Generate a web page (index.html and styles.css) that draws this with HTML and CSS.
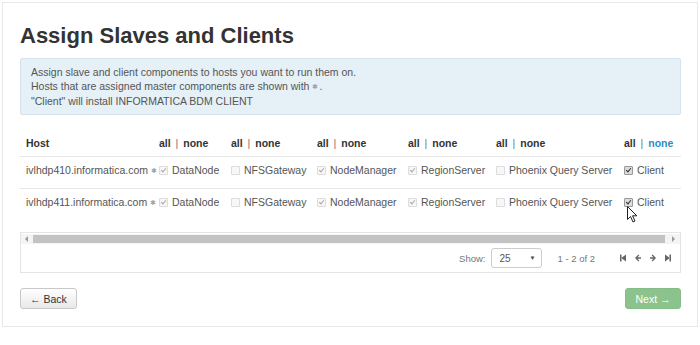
FILE: index.html
```html
<!DOCTYPE html>
<html lang="en">
<head>
    <meta charset="UTF-8">
    <title>Assign Slaves and Clients</title>
    <link rel="stylesheet" href="styles.css">
</head>
<body>
    <div class="panel">
        <h2>Assign Slaves and Clients</h2>
        <div class="alert">
            Assign slave and client components to hosts you want to run them on.<br>
            Hosts that are assigned master components are shown with<span class="star">&#10033;</span>.<br>
            "Client" will install INFORMATICA BDM CLIENT
        </div>

        <table class="hosts">
            <colgroup>
                <col style="width:133px"><col style="width:72px"><col style="width:86px">
                <col style="width:91px"><col style="width:88px"><col style="width:128px"><col>
            </colgroup>
            <thead>
                <tr>
                    <th>Host</th>
                    <th><a>all</a> <span class="sep">|</span> <a>none</a></th>
                    <th><a>all</a> <span class="sep">|</span> <a>none</a></th>
                    <th><a>all</a> <span class="sep">|</span> <a>none</a></th>
                    <th><a>all</a> <span class="sep">|</span> <a>none</a></th>
                    <th><a>all</a> <span class="sep">|</span> <a>none</a></th>
                    <th><a>all</a> <span class="sep">|</span> <a class="hover">none</a></th>
                </tr>
            </thead>
            <tbody>
                <tr>
                    <td>ivlhdp410.informatica.com<span class="star">&#10033;</span></td>
                    <td><label><span class="cb off on"></span>DataNode</label></td>
                    <td><label><span class="cb off"></span>NFSGateway</label></td>
                    <td><label><span class="cb off on"></span>NodeManager</label></td>
                    <td><label><span class="cb off on"></span>RegionServer</label></td>
                    <td><label><span class="cb off"></span>Phoenix Query Server</label></td>
                    <td><label><span class="cb on"></span>Client</label></td>
                </tr>
                <tr>
                    <td>ivlhdp411.informatica.com<span class="star">&#10033;</span></td>
                    <td><label><span class="cb off on"></span>DataNode</label></td>
                    <td><label><span class="cb off"></span>NFSGateway</label></td>
                    <td><label><span class="cb off on"></span>NodeManager</label></td>
                    <td><label><span class="cb off on"></span>RegionServer</label></td>
                    <td><label><span class="cb off"></span>Phoenix Query Server</label></td>
                    <td class="cursor-cell">
                        <label><span class="cb on"></span>Client</label>
                        <svg class="cursor" width="11" height="17" viewBox="0 0 11 17">
                            <path d="M0.5 0.5 L0.5 13.5 L3.5 10.5 L6 16 L8 15 L5.5 9.8 L9.8 9.8 Z" fill="#fff" stroke="#222" stroke-width="1"/>
                        </svg>
                    </td>
                </tr>
            </tbody>
        </table>

        <div class="table-foot">
            <div class="scrollbar">
                <span class="arr left"></span>
                <div class="thumb"></div>
                <span class="arr right"></span>
            </div>
            <div class="pager">
                <span class="show">Show:</span>
                <div class="select"><span>25</span><span class="caret">&#9660;</span></div>
                <span class="count">1 - 2 of 2</span>
                <div class="nav">
                    <svg width="6" height="8" viewBox="0 0 6 8"><rect x="0" y="0.5" width="1.5" height="7" fill="#666"/><path d="M1.2 4 L6 0.5 V7.5 Z" fill="#666"/></svg>
                    <svg width="6" height="8" viewBox="0 0 6 8"><path d="M0 4 L3.4 0.5 L4.3 1.4 L2.6 3.3 H6 V4.7 H2.6 L4.3 6.6 L3.4 7.5 Z" fill="#666"/></svg>
                    <svg width="6" height="8" viewBox="0 0 6 8"><path d="M6 4 L2.6 0.5 L1.7 1.4 L3.4 3.3 H0 V4.7 H3.4 L1.7 6.6 L2.6 7.5 Z" fill="#666"/></svg>
                    <svg width="6" height="8" viewBox="0 0 6 8"><rect x="4.5" y="0.5" width="1.5" height="7" fill="#666"/><path d="M4.8 4 L0 0.5 V7.5 Z" fill="#666"/></svg>
                </div>
            </div>
        </div>

        <div class="actions">
            <button class="btn">&larr; Back</button>
            <button class="btn btn-next">Next &rarr;</button>
        </div>
    </div>
</body>
</html>
```

FILE: styles.css
```css
body {
    margin: 0;
    background: #fff;
    font-family: "Liberation Sans", Arial, sans-serif;
    font-size: 10.5px;
    color: #555;
}
.panel {
    margin: 2px 2px 0;
    border: 1px solid #e8e8e8;
    padding: 0 16px 17px 17px;
}
h2 {
    margin: 20px 0 9px;
    font-size: 22px;
    line-height: 26px;
    font-weight: bold;
    color: #333;
}
.alert {
    background: #e6f0f7;
    border: 1px solid #d6e3ee;
    border-radius: 2px;
    padding: 6px 10px;
    line-height: 14px;
    color: #555;
}
.star {
    color: #9aa4ad;
    font-size: 7px;
    margin: 0 1px 0 3px;
    vertical-align: 1px;
}
.hosts {
    width: 100%;
    margin-top: 13px;
    border-collapse: collapse;
    table-layout: fixed;
}
.hosts th, .hosts td {
    text-align: left;
    white-space: nowrap;
    line-height: 14px;
    padding: 6px 6px 10px;
}
.hosts th {
    padding: 8px 6px 6px;
    font-weight: bold;
    color: #333;
    border-bottom: 1px solid #e6e6e6;
}
.hosts tbody tr:first-child td {
    border-bottom: 1px solid #e6e6e6;
}
.hosts a {
    color: #333;
}
.hosts a.hover {
    color: #2f8dc6;
}
.sep {
    font-weight: normal;
    color: #777;
    margin: 0 2px;
}
label {
    display: inline-flex;
    align-items: center;
    gap: 4px;
}
.cb {
    position: relative;
    display: inline-block;
    width: 7px;
    height: 7px;
    border: 1px solid #999;
    border-radius: 1px;
    background: #dcdcdc;
}
.cb.off {
    border-color: #dcdcdc;
    background: #f7f7f7;
}
.cb.on::after {
    content: "";
    position: absolute;
    left: 2px;
    top: 0;
    width: 2px;
    height: 4px;
    border: solid #333;
    border-width: 0 1.5px 1.5px 0;
    transform: rotate(40deg);
}
.cb.off.on::after {
    border-color: #aaa;
}
.cursor-cell {
    position: relative;
}
.cursor {
    position: absolute;
    left: 9px;
    top: 17px;
}
.table-foot {
    margin-top: 12px;
    border: 1px solid #e4e4e4;
}
.scrollbar {
    display: flex;
    align-items: center;
    height: 10px;
    margin: 1px 0 0;
    background: #f4f4f4;
}
.thumb {
    flex: 1;
    height: 8px;
    margin: 0 7px 0 5px;
    background: #c3c3c3;
}
.arr {
    width: 0;
    height: 0;
    border-top: 3px solid transparent;
    border-bottom: 3px solid transparent;
}
.arr.left {
    margin-left: 4px;
    border-right: 3px solid #999;
}
.arr.right {
    margin-right: 5px;
    border-left: 3px solid #999;
}
.pager {
    display: flex;
    align-items: center;
    justify-content: flex-end;
    height: 28px;
    padding-right: 9px;
    font-size: 9.5px;
    color: #777;
}
.show {
    margin-right: 5px;
}
.select {
    display: flex;
    align-items: center;
    justify-content: space-between;
    box-sizing: border-box;
    width: 51px;
    height: 20px;
    padding: 0 5px 0 8px;
    border: 1px solid #ccc;
    border-radius: 3px;
    background: #fff;
    color: #555;
    font-size: 10px;
}
.caret {
    font-size: 6px;
    color: #444;
}
.count {
    margin: 0 25px 0 16px;
}
.nav {
    display: flex;
    gap: 9px;
}
.actions {
    display: flex;
    justify-content: space-between;
    margin-top: 15px;
}
.btn {
    font-family: "Liberation Sans", Arial, sans-serif;
    font-size: 10.5px;
    height: 21px;
    width: 57px;
    padding: 0;
    border: 1px solid #c8c8c8;
    border-radius: 3px;
    background: linear-gradient(#ffffff, #e8e8e8);
    color: #333;
}
.btn-next {
    width: 56px;
    border-color: #84bd86;
    background: #8cc38d;
    color: #fff;
}
```
